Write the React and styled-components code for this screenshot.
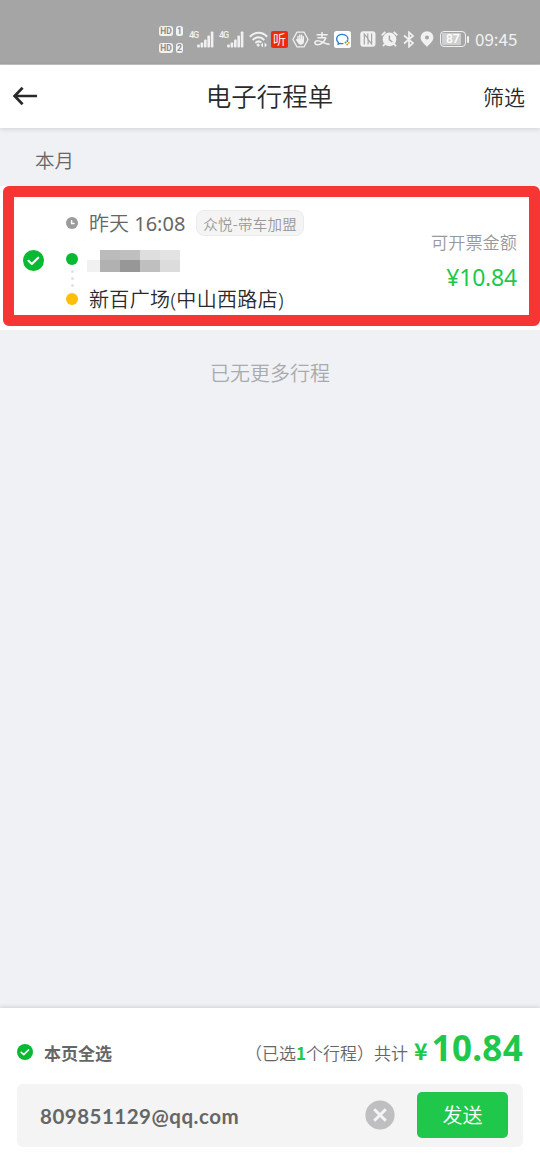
import styled, { createGlobalStyle } from 'styled-components'

const color = {
  status: '#a5a5a5',
  icon: '#f1f1f1',
  page: '#f0f1f5',
  text: '#2a2a2c',
  grey: '#666666',
  light: '#999999',
  green: '#1fc74a',
  check: '#07ba31',
  start: '#07ba31',
  end: '#ffbf05',
  frame: '#f63535',
  field: '#f4f4f4',
}

const signalBars = [3, 5, 8, 12, 16]

const mosaic = [
  ['#ffffff', '#bbbbbb', '#bfbfbf', '#dedede', '#e3e3e3'],
  ['#f1f1f1', '#b1b1b1', '#979797', '#bfbfbf', '#dcdcdc'],
]

const HdBadge = ({ sim }) => (
  <HdRow>
    <HdBox $width={14}>HD</HdBox>
    <HdBox $width={7}>{sim}</HdBox>
  </HdRow>
)

const Signal = ({ gap }) => (
  <SignalBox $gap={gap}>
    <SignalLabel>4G</SignalLabel>
    <svg width="17" height="17" viewBox="0 0 17 17" fill={color.icon}>
      {signalBars.map((h, i) => (
        <rect key={h} x={0.2 + i * 3.4} y={16.5 - h} width="2.6" height={h} rx="0.8" />
      ))}
    </svg>
  </SignalBox>
)

const WifiIcon = () => (
  <svg width="19" height="17" viewBox="0 0 19 17" fill="none" stroke={color.icon} strokeWidth="2">
    <path d="M0.8 5.8C5.8 0.4 13.2 0.4 18.2 5.8" />
    <path d="M3.7 9C7.2 5.4 11.8 5.4 15.3 9" />
    <path d="M6.4 12C8.3 10.1 10.7 10.1 12.3 11.6" />
    <path d="M9.2 12.3l1.8 1.8-1.8 1.9-1.8-1.9z" fill={color.icon} stroke="none" />
    <path d="M14 11.5v5l-2.2-2.5zM15.6 11.5v5l2.4-2.5z" fill={color.icon} stroke="none" />
  </svg>
)

const HandIcon = () => (
  <svg width="17" height="17" viewBox="0 0 17 17" fill="none">
    <path
      d="M4.9 1.2h7.2l4 7.3-4 7.3H4.9l-4-7.3z"
      stroke={color.icon}
      strokeWidth="1.3"
      strokeLinejoin="round"
    />
    <path
      d="M6 9.6V5.4M7.8 9V3.9M9.6 9V4.2M11.3 9.4V5.6M4.6 8.8l2 2.3"
      stroke={color.icon}
      strokeWidth="1.4"
      strokeLinecap="round"
    />
    <path d="M5.4 8.2h6.6v2.4c0 2-1.2 3.2-3.2 3.2s-2.6-1.4-3.4-3z" fill={color.icon} />
  </svg>
)

const AlipayIcon = () => (
  <svg width="16" height="16" viewBox="0 0 16 16" fill="none" stroke={color.icon}>
    <path d="M2.6 3.7h11M8 1v5.8M3.4 6.7h8.6" strokeWidth="1.5" />
    <path d="M11.9 6.6C10.6 10.6 7 13.8 3.6 13.8c-3.8 0-3.4-4 0-4 3.6 0 6.6 3.3 12 3.6" strokeWidth="1.6" />
  </svg>
)

const ChatIcon = () => (
  <svg width="17" height="17" viewBox="0 0 17 17" fill="none">
    <rect width="17" height="17" rx="2.5" fill="#ffffff" />
    <path
      d="M9.4 12.4c-1 .3-2.2.3-3.2 0L4.1 13.3l.3-1.9C1.2 8.8 2.5 3.5 8 3.4c4.4 0 6.4 2.9 5.8 5.4"
      stroke="#2d7fd3"
      strokeWidth="1.3"
    />
    <circle cx="13.4" cy="9.9" r="1" fill="#2d7fd3" />
    <circle cx="11.5" cy="11.6" r="1" fill="#4cb748" />
    <circle cx="14.8" cy="11.8" r="1" fill="#f0a33a" />
    <circle cx="13.2" cy="13.5" r="1" fill="#ef8a3a" />
  </svg>
)

const NfcIcon = () => (
  <svg width="16" height="16" viewBox="0 0 16 16" fill="none">
    <rect x="0.3" y="0.3" width="15.2" height="15.4" rx="3" fill={color.icon} />
    <path d="M4.3 13.5V3.2l3.8 4.6v5.7M11.6 2.5v10.3L7.800 8.2V2.5" stroke={color.status} strokeWidth="1.2" />
  </svg>
)

const AlarmIcon = () => (
  <svg width="17" height="16" viewBox="0 0 17 16" fill="none">
    <circle cx="8.5" cy="8.4" r="6.8" fill={color.icon} />
    <path
      d="M0.7 4.4L4.3 0.9M16.3 4.4L12.7 0.9M3.7 13l-1.6 2.2M13.3 13l1.6 2.2"
      stroke={color.icon}
      strokeWidth="1.8"
    />
    <path d="M8.4 4.6v4.2l3 2.2" stroke={color.status} strokeWidth="1.4" />
  </svg>
)

const BluetoothIcon = () => (
  <svg width="12" height="17" viewBox="0 0 12 17" fill="none" stroke={color.icon} strokeWidth="1.7">
    <path d="M1 4.5l9 7.6-4 3.6V1.3l4 3.6-9 7.6" />
  </svg>
)

const PinIcon = () => (
  <svg width="14" height="16" viewBox="0 0 14 16" fill={color.icon}>
    <path
      fillRule="evenodd"
      d="M7 .2a6.4 6.4 0 0 1 6.4 6.4c0 3.8-4 6.7-6.4 9.3C4.6 13.3.6 10.4.6 6.6A6.4 6.4 0 0 1 7 .2zM7 4.6a2 2 0 1 0 0 4 2 2 0 0 0 0-4z"
    />
  </svg>
)

const BackIcon = () => (
  <svg width="26" height="20" viewBox="0 0 26 20" fill="none" stroke={color.text} strokeWidth="2.7">
    <path d="M10.6 1.8L2.6 10l8 8.2M2.6 10H25" />
  </svg>
)

const CheckIcon = ({ size }) => (
  <svg width={size} height={size} viewBox="0 0 20 20" fill="none">
    <circle cx="10" cy="10" r="10" fill={color.check} />
    <path
      d="M5.2 10.3l3.2 3 6.1-6"
      stroke="#ffffff"
      strokeWidth="2"
      strokeLinecap="round"
      strokeLinejoin="round"
    />
  </svg>
)

const ClockIcon = () => (
  <svg width="12" height="12" viewBox="0 0 12 12" fill="none">
    <circle cx="6" cy="6" r="6" fill="#9b9b9b" />
    <path d="M5.6 3v3.5h3" stroke="#ffffff" strokeWidth="1.4" />
  </svg>
)

const ClearIcon = () => (
  <svg width="30" height="30" viewBox="0 0 30 30" fill="none">
    <circle cx="15" cy="15" r="14.6" fill="#bfbfc1" />
    <path d="M9.2 9.2l11.6 11.6M20.8 9.2L9.2 20.8" stroke="#f4f4f4" strokeWidth="3" />
  </svg>
)

const App = () => {
  return (
    <Screen>
      <GlobalStyle />
      <StatusBar>
        <HdColumn>
          <HdBadge sim="1" />
          <HdBadge sim="2" />
        </HdColumn>
        <Signal gap={6} />
        <Signal gap={5} />
        <Slot $gap={5}><WifiIcon /></Slot>
        <Slot $gap={3}><ListenBadge>听</ListenBadge></Slot>
        <Slot $gap={4}><HandIcon /></Slot>
        <Slot $gap={5}><AlipayIcon /></Slot>
        <Slot $gap={4}><ChatIcon /></Slot>
        <Slot $gap={9}><NfcIcon /></Slot>
        <Slot $gap={5}><AlarmIcon /></Slot>
        <Slot $gap={5}><BluetoothIcon /></Slot>
        <Slot $gap={5}><PinIcon /></Slot>
        <Slot $gap={6}>
          <Battery><BatteryLevel>87</BatteryLevel></Battery>
          <BatteryTip />
        </Slot>
        <Time>09:45</Time>
      </StatusBar>
      <Header>
        <BackIcon />
        <Title>电子行程单</Title>
        <Filter>筛选</Filter>
      </Header>
      <Content>
        <Month>本月</Month>
        <Card>
          <Frame>
            <CheckCell><CheckIcon size={21} /></CheckCell>
            <Trip>
              <TripRow $height={39}>
                <Marker><ClockIcon /></Marker>
                <TripTime>昨天 <span>16:08</span></TripTime>
                <Tag>众悦-带车加盟</Tag>
              </TripRow>
              <TripRow $height={33}>
                <Marker><Dot $color={color.start} /></Marker>
                <Mosaic>
                  {mosaic.map((row, y) =>
                    row.map((shade, x) => <Pixel key={`${x}-${y}`} $shade={shade} />)
                  )}
                </Mosaic>
                <Trail>
                  <TrailDot />
                  <TrailDot />
                  <TrailDot />
                </Trail>
              </TripRow>
              <TripRow $height={47}>
                <Marker><Dot $color={color.end} /></Marker>
                <Place>新百广场(中山西路店)</Place>
              </TripRow>
            </Trip>
            <Amount>
              <AmountLabel>可开票金额</AmountLabel>
              <AmountValue>¥10.84</AmountValue>
            </Amount>
          </Frame>
        </Card>
        <NoMore>已无更多行程</NoMore>
      </Content>
      <Footer>
        <Summary>
          <CheckIcon size={16} />
          <SelectAll>本页全选</SelectAll>
          <Count>（已选<b>1</b>个行程）</Count>
          <TotalLabel>共计</TotalLabel>
          <Currency>¥</Currency>
          <Total>10.84</Total>
        </Summary>
        <MailBox>
          <Mail>809851129@qq.com</Mail>
          <ClearIcon />
          <Send>发送</Send>
        </MailBox>
      </Footer>
    </Screen>
  )
}

export default App

const GlobalStyle = createGlobalStyle`
  * {
    box-sizing: border-box;
  }
  body {
    margin: 0;
    font-family: 'Noto Sans CJK SC', sans-serif;
    font-weight: 350;
  }
  svg {
    display: block;
    flex: none;
  }
`
const Screen = styled.div`
  display: flex;
  flex-direction: column;
  width: 540px;
  height: 1170px;
  overflow: hidden;
  background-color: ${color.page};
  white-space: nowrap;
`
const StatusBar = styled.div`
  display: flex;
  align-items: center;
  flex: none;
  height: 65px;
  padding: 14px 0 0 159px;
  background-color: ${color.status};
  border-bottom: 1px solid #c4c4c4;
  color: ${color.icon};
`
const HdColumn = styled.div`
  display: flex;
  flex-direction: column;
  gap: 7px;
`
const HdRow = styled.div`
  display: flex;
  gap: 3px;
`
const HdBox = styled.div`
  width: ${props => props.$width}px;
  height: 10px;
  border-radius: 2.5px;
  background-color: ${color.icon};
  color: #8c8c8c;
  font: bold 8.5px/10px 'Roboto', sans-serif;
  text-align: center;
`
const SignalBox = styled.div`
  display: flex;
  margin-left: ${props => props.$gap}px;
`
const SignalLabel = styled.div`
  width: 8px;
  font: 500 9px/8px 'Roboto', sans-serif;
  letter-spacing: -1px;
`
const Slot = styled.div`
  display: flex;
  align-items: center;
  margin-left: ${props => props.$gap}px;
`
const ListenBadge = styled.div`
  width: 17px;
  height: 17px;
  border-radius: 2px;
  background-color: #ee2a0c;
  color: #ffffff;
  font-size: 13px;
  line-height: 16px;
  text-align: center;
`
const Battery = styled.div`
  width: 26px;
  height: 16px;
  padding: 1px;
  border: 1.5px solid ${color.icon};
  border-radius: 4px;
`
const BatteryLevel = styled.div`
  width: 19px;
  height: 12px;
  padding-left: 4px;
  border-radius: 1px;
  background-color: #cfcfcf;
  color: #ffffff;
  font: 500 12px/12px 'Roboto', sans-serif;
`
const BatteryTip = styled.div`
  width: 2px;
  height: 7px;
  margin-left: 1px;
  border-radius: 1px;
  background-color: ${color.icon};
`
const Time = styled.div`
  margin-left: 6px;
  font-size: 17px;
  font-weight: 400;
  line-height: 20px;
`
const Header = styled.div`
  display: flex;
  align-items: center;
  justify-content: space-between;
  flex: none;
  height: 63px;
  padding: 0 15px 2px 12px;
  background-color: #ffffff;
  box-shadow: 0 1px 5px rgba(0, 0, 0, 0.14);
  color: ${color.text};
`
const Title = styled.div`
  padding: 0 0 1px 18px;
  font-size: 25.5px;
  line-height: 34px;
`
const Filter = styled.div`
  font-size: 21px;
`
const Content = styled.div`
  flex: 1;
`
const Month = styled.div`
  height: 58px;
  padding: 17px 0 0 35px;
  color: ${color.grey};
  font-size: 19.5px;
  line-height: 29px;
`
const Card = styled.div`
  height: 144px;
  padding: 0 0 4px 3px;
  background-color: #ffffff;
`
const Frame = styled.div`
  display: flex;
  height: 140px;
  border: 11px solid ${color.frame};
  border-radius: 6px;
  background-color: #ffffff;
`
const CheckCell = styled.div`
  display: flex;
  align-items: center;
  width: 45px;
  padding: 9px 0 0 9px;
`
const Trip = styled.div`
  flex: 1;
  padding-top: 6px;
`
const TripRow = styled.div`
  position: relative;
  display: flex;
  align-items: center;
  height: ${props => props.$height}px;
`
const Marker = styled.div`
  display: flex;
  justify-content: center;
  width: 26px;
  margin-right: 4px;
`
const TripTime = styled.div`
  color: ${color.grey};
  font-family: 'Noto Sans', 'Noto Sans CJK SC', sans-serif;
  font-size: 20px;
  line-height: 27px;
  padding-top: 1px;

  span {
    font-weight: 400;
  }
`
const Tag = styled.div`
  height: 26px;
  margin-left: 11px;
  padding: 0 6px;
  border: 1px solid #ebebeb;
  border-radius: 8px;
  background-color: ${color.field};
  color: ${color.light};
  font-size: 14.5px;
  line-height: 25px;
  letter-spacing: 0.25px;
`
const Dot = styled.div`
  width: 12px;
  height: 12px;
  border-radius: 50%;
  background-color: ${props => props.$color};
`
const Mosaic = styled.div`
  display: grid;
  grid-template-columns: 13px 20px 20px 20px 20px;
  grid-template-rows: 10px 12px;
  margin: 4px 0 0 -2px;
`
const Pixel = styled.div`
  background-color: ${props => props.$shade};
`
const Trail = styled.div`
  position: absolute;
  left: 12px;
  top: 28px;
  display: flex;
  flex-direction: column;
  gap: 4px;
`
const TrailDot = styled.div`
  width: 3px;
  height: 3px;
  border-radius: 50%;
  background-color: #e2e2e2;
`
const Place = styled.div`
  color: ${color.text};
  font-family: 'Noto Sans', 'Noto Sans CJK SC', sans-serif;
  font-size: 20px;
  letter-spacing: 0.35px;
`
const Amount = styled.div`
  padding: 33px 12px 0 0;
  text-align: right;
`
const AmountLabel = styled.div`
  color: ${color.light};
  font-size: 17.2px;
  line-height: 24px;
`
const AmountValue = styled.div`
  margin-top: 7px;
  color: ${color.green};
  font: 400 23px/32px 'Noto Sans', sans-serif;
  letter-spacing: -0.2px;
`
const NoMore = styled.div`
  padding-top: 28px;
  color: #a9aaae;
  font-size: 20px;
  line-height: 30px;
  text-align: center;
`
const Footer = styled.div`
  flex: none;
  height: 162px;
  padding: 20px 17px 0;
  background-color: #ffffff;
  box-shadow: 0 -1px 4px rgba(0, 0, 0, 0.14);
`
const Summary = styled.div`
  display: flex;
  align-items: center;
  height: 48px;
  color: ${color.grey};
  font-size: 17px;
`
const SelectAll = styled.div`
  margin-left: 11px;
  font-weight: bold;
`
const Count = styled.div`
  margin-left: auto;

  b {
    color: ${color.green};
  }
`
const TotalLabel = styled.div`
  margin-left: 0;
`
const Currency = styled.div`
  margin: 0 0 4px 6px;
  color: ${color.green};
  font-size: 23px;
  font-weight: bold;
`
const Total = styled.div`
  margin: 0 0 8px 4px;
  color: ${color.green};
  font: bold 35px/40px 'Noto Sans', sans-serif;
  letter-spacing: 0.3px;
`
const MailBox = styled.div`
  display: flex;
  align-items: center;
  height: 63px;
  margin-top: 8px;
  padding: 0 15px 1px 23px;
  border-radius: 6px;
  background-color: ${color.field};
`
const Mail = styled.div`
  flex: 1;
  padding-top: 2px;
  color: ${color.grey};
  font: bold 20.5px/30px 'Lato', sans-serif;
  letter-spacing: 0.5px;
`
const Send = styled.div`
  width: 91px;
  height: 46px;
  margin-left: 22px;
  border-radius: 5px;
  background-color: ${color.green};
  color: #ffffff;
  font-size: 20px;
  line-height: 45px;
  text-align: center;
`
